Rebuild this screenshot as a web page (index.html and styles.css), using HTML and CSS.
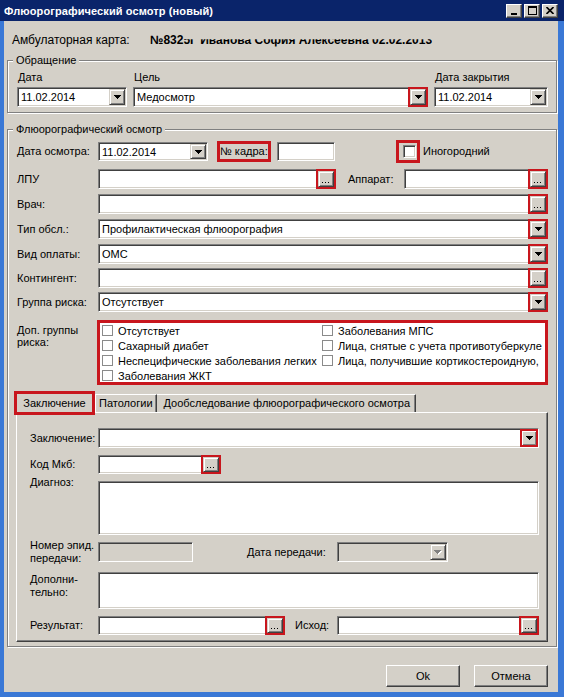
FILE: index.html
```html
<!DOCTYPE html>
<html lang="ru">
<head>
<meta charset="utf-8">
<title>Флюорографический осмотр (новый)</title>
<link rel="stylesheet" href="styles.css">
</head>
<body>
<div class="window">
  <div class="titlebar">
    <span class="title">Флюорографический осмотр (новый)</span>
    <div class="caption-btns">
      <span class="cbtn"><svg width="8" height="8" viewBox="0 0 8 8"><rect x="1" y="6" width="6" height="2" fill="#000"/></svg></span>
      <span class="cbtn"><svg width="9" height="9" viewBox="0 0 9 9"><rect x="0.5" y="0.5" width="8" height="8" fill="none" stroke="#000"/><rect x="0" y="0" width="9" height="2" fill="#000"/></svg></span>
      <span class="cbtn"><svg width="8" height="7" viewBox="0 0 8 7"><path d="M0.5 0 L7.5 7 M7.5 0 L0.5 7" stroke="#000" stroke-width="1.6" fill="none"/></svg></span>
    </div>
  </div>

  <div class="client">
    <div class="card-row">
      <span class="card-label">Амбулаторная карта:</span>
      <span class="card-value">№832<span class="card-clipped">5Г Иванова София Алексеевна 02.02.2013</span></span>
    </div>

    <fieldset class="group group-visit">
      <legend>Обращение</legend>
      <div class="visit-row">
        <div class="visit-col col-date">
          <div class="cap">Дата</div>
          <div class="field"><span class="val">11.02.2014</span><span class="btn"><svg class="tri" width="7" height="4" viewBox="0 0 7 4"><path d="M0 0h7v1h-1v1h-1v1h-1v1h-1v-1h-1v-1h-1v-1h-1z"/></svg></span></div>
        </div>
        <div class="visit-col col-goal">
          <div class="cap">Цель</div>
          <div class="field"><span class="val">Медосмотр</span><span class="btn mark"><svg class="tri" width="7" height="4" viewBox="0 0 7 4"><path d="M0 0h7v1h-1v1h-1v1h-1v1h-1v-1h-1v-1h-1v-1h-1z"/></svg></span></div>
        </div>
        <div class="visit-col col-close">
          <div class="cap">Дата закрытия</div>
          <div class="field"><span class="val">11.02.2014</span><span class="btn"><svg class="tri" width="7" height="4" viewBox="0 0 7 4"><path d="M0 0h7v1h-1v1h-1v1h-1v1h-1v-1h-1v-1h-1v-1h-1z"/></svg></span></div>
        </div>
      </div>
    </fieldset>

    <fieldset class="group group-exam">
      <legend>Флюорографический осмотр</legend>

      <div class="row row-first">
        <span class="lbl lbl-main">Дата осмотра:</span>
        <div class="field f-date short"><span class="val">11.02.2014</span><span class="btn"><svg class="tri" width="7" height="4" viewBox="0 0 7 4"><path d="M0 0h7v1h-1v1h-1v1h-1v1h-1v-1h-1v-1h-1v-1h-1z"/></svg></span></div>
        <span class="lbl mark-box frame-lbl">№ кадра:</span>
        <div class="field f-frame short"></div>
        <span class="mark-box chk-wrap"><span class="chk3d"></span></span>
        <span class="lbl chk-text">Иногородний</span>
      </div>

      <div class="row row-lpu">
        <span class="lbl lbl-main">ЛПУ</span>
        <div class="field f-lpu"><span class="val"></span><span class="btn dots mark"><svg width="8" height="1" viewBox="0 0 8 1"><rect x="0" y="0" width="1" height="1"/><rect x="3" y="0" width="1" height="1"/><rect x="6" y="0" width="1" height="1"/></svg></span></div>
        <span class="lbl lbl-app">Аппарат:</span>
        <div class="field f-app"><span class="val"></span><span class="btn dots mark"><svg width="8" height="1" viewBox="0 0 8 1"><rect x="0" y="0" width="1" height="1"/><rect x="3" y="0" width="1" height="1"/><rect x="6" y="0" width="1" height="1"/></svg></span></div>
      </div>

      <div class="row row-m5">
        <span class="lbl lbl-main">Врач:</span>
        <div class="field f-full"><span class="val"></span><span class="btn dots mark"><svg width="8" height="1" viewBox="0 0 8 1"><rect x="0" y="0" width="1" height="1"/><rect x="3" y="0" width="1" height="1"/><rect x="6" y="0" width="1" height="1"/></svg></span></div>
      </div>

      <div class="row row-m5">
        <span class="lbl lbl-main">Тип обсл.:</span>
        <div class="field f-full"><span class="val">Профилактическая флюорография</span><span class="btn mark"><svg class="tri" width="7" height="4" viewBox="0 0 7 4"><path d="M0 0h7v1h-1v1h-1v1h-1v1h-1v-1h-1v-1h-1v-1h-1z"/></svg></span></div>
      </div>

      <div class="row row-m5">
        <span class="lbl lbl-main">Вид оплаты:</span>
        <div class="field f-full"><span class="val">ОМС</span><span class="btn mark"><svg class="tri" width="7" height="4" viewBox="0 0 7 4"><path d="M0 0h7v1h-1v1h-1v1h-1v1h-1v-1h-1v-1h-1v-1h-1z"/></svg></span></div>
      </div>

      <div class="row row-m4">
        <span class="lbl lbl-main">Контингент:</span>
        <div class="field f-full"><span class="val"></span><span class="btn dots mark"><svg width="8" height="1" viewBox="0 0 8 1"><rect x="0" y="0" width="1" height="1"/><rect x="3" y="0" width="1" height="1"/><rect x="6" y="0" width="1" height="1"/></svg></span></div>
      </div>

      <div class="row row-m4">
        <span class="lbl lbl-main">Группа риска:</span>
        <div class="field f-full"><span class="val">Отсутствует</span><span class="btn mark"><svg class="tri" width="7" height="4" viewBox="0 0 7 4"><path d="M0 0h7v1h-1v1h-1v1h-1v1h-1v-1h-1v-1h-1v-1h-1z"/></svg></span></div>
      </div>

      <div class="row row-check">
        <span class="lbl lbl-main lbl-multi">Доп. группы<br>риска:</span>
        <div class="checklist">
          <div class="cl-col cl-col1">
            <div class="cl-item"><span class="cb"></span>Отсутствует</div>
            <div class="cl-item"><span class="cb"></span>Сахарный диабет</div>
            <div class="cl-item"><span class="cb"></span>Неспецифические заболевания легких</div>
            <div class="cl-item"><span class="cb"></span>Заболевания ЖКТ</div>
          </div>
          <div class="cl-col cl-col2">
            <div class="cl-item"><span class="cb"></span>Заболевания МПС</div>
            <div class="cl-item"><span class="cb"></span>Лица, снятые с учета противотуберкуле</div>
            <div class="cl-item"><span class="cb"></span>Лица, получившие кортикостероидную,</div>
          </div>
        </div>
      </div>

      <div class="tabs">
        <span class="tab tab-active">Заключение</span>
        <span class="tab tab-path">Патологии</span>
        <span class="tab tab-extra">Дообследование флюорографического осмотра</span>
      </div>
      <div class="tabpanel">
        <div class="prow prow-first">
          <span class="plbl">Заключение:</span>
          <div class="field p-full"><span class="val"></span><span class="btn mark-in"><svg class="tri" width="7" height="4" viewBox="0 0 7 4"><path d="M0 0h7v1h-1v1h-1v1h-1v1h-1v-1h-1v-1h-1v-1h-1z"/></svg></span></div>
        </div>
        <div class="prow">
          <span class="plbl">Код Мкб:</span>
          <div class="field p-mkb short"><span class="val"></span><span class="btn dots mark"><svg width="8" height="1" viewBox="0 0 8 1"><rect x="0" y="0" width="1" height="1"/><rect x="3" y="0" width="1" height="1"/><rect x="6" y="0" width="1" height="1"/></svg></span></div>
        </div>
        <div class="prow prow-top">
          <span class="plbl plbl-diag">Диагноз:</span>
          <div class="field p-full p-diag"></div>
        </div>
        <div class="prow prow-top">
          <span class="plbl plbl-num">Номер эпид.<br>передачи:</span>
          <div class="field p-num disabled"></div>
          <span class="plbl plbl-date">Дата передачи:</span>
          <div class="field p-date disabled"><span class="val"></span><span class="btn btn-dis"><svg class="tri" width="8" height="5" viewBox="0 0 8 5"><path d="M1 1h7v1h-1v1h-1v1h-1v1h-1v-1h-1v-1h-1v-1h-1z" fill="#fff"/><path d="M0 0h7v1h-1v1h-1v1h-1v1h-1v-1h-1v-1h-1v-1h-1z" fill="#808080"/></svg></span></div>
        </div>
        <div class="prow prow-top">
          <span class="plbl plbl-more">Дополни-<br>тельно:</span>
          <div class="field p-full p-more"></div>
        </div>
        <div class="prow">
          <span class="plbl">Результат:</span>
          <div class="field p-res short"><span class="val"></span><span class="btn dots mark"><svg width="8" height="1" viewBox="0 0 8 1"><rect x="0" y="0" width="1" height="1"/><rect x="3" y="0" width="1" height="1"/><rect x="6" y="0" width="1" height="1"/></svg></span></div>
          <span class="plbl plbl-out">Исход:</span>
          <div class="field p-out short"><span class="val"></span><span class="btn dots mark"><svg width="8" height="1" viewBox="0 0 8 1"><rect x="0" y="0" width="1" height="1"/><rect x="3" y="0" width="1" height="1"/><rect x="6" y="0" width="1" height="1"/></svg></span></div>
        </div>
      </div>
    </fieldset>

    <div class="actions">
      <span class="pbtn">Ok</span>
      <span class="pbtn">Отмена</span>
    </div>
  </div>
</div>
</body>
</html>
```

FILE: styles.css
```css
* { box-sizing: border-box; }
html, body { margin: 0; padding: 0; }
body {
  width: 564px; height: 697px; overflow: hidden;
  background: #3a78d6;
  font-family: "Liberation Sans", Arial, sans-serif;
  font-size: 11px; color: #000;
}
.window { width: 564px; height: 697px; display: flex; flex-direction: column; }

/* title bar */
.titlebar {
  height: 21px; flex: none; background: #0a246a; color: #fff;
  display: flex; align-items: center; padding: 0 6px 0 4px;
}
.title { flex: 1; font-weight: bold; font-size: 11px; letter-spacing: 0.1px; }
.caption-btns { display: flex; gap: 2px; }
.cbtn {
  width: 16px; height: 14px; background: #d4d0c8;
  border: 1px solid; border-color: #fff #404040 #404040 #fff;
  box-shadow: inset -1px -1px 0 #808080;
  display: flex; align-items: center; justify-content: center;
}

/* client area */
.client {
  flex: 1; margin: 0 6px 5px 4px; background: #d4d0c8;
  display: flex; flex-direction: column;
}

.card-row {
  height: 19px; margin-top: 9px; padding-left: 8px;
  display: flex; align-items: center; font-size: 12px; white-space: nowrap;
}
.card-label { width: 138px; flex: none; }
.card-value { font-weight: bold; }
.card-clipped { display: inline-block; clip-path: inset(48% 0 0 0); }

/* group boxes */
.group {
  margin: 0 0 0 3px; width: 550px; min-width: 0;
  border: 1px solid #808080;
  box-shadow: inset 1px 1px 0 #fff, 1px 1px 0 #fff;
  padding: 0 8px 0 9px;
}
.group legend {
  padding: 0 3px; margin-left: -4px; line-height: 13px; height: 13px;
  background: #d4d0c8;
}
.group-visit { margin-top: 5px; padding-bottom: 5px; }
.group-exam { margin-top: 10px; padding-bottom: 4px; }

.visit-row { display: flex; gap: 6px; }
.visit-col { flex: none; }
.col-date { width: 110px; }
.col-goal { width: 295px; }
.col-close { width: 114px; }
.cap { height: 13px; line-height: 13px; margin-top: 4px; margin-bottom: 3px; padding-left: 1px; }

/* fields */
.field {
  height: 20px; background: #fff; flex: none;
  border: 1px solid; border-color: #808080 #fff #fff #808080;
  box-shadow: inset 1px 1px 0 #404040, inset -1px -1px 0 #d4d0c8;
  display: flex; align-items: stretch; padding: 1px;
}
.field.short { height: 19px; }
.field.disabled { background: #d4d0c8; }
.val { flex: 1; padding-left: 2px; white-space: nowrap; overflow: hidden; line-height: 16px; }
.btn {
  width: 16px; flex: none; background: #d4d0c8;
  border: 1px solid; border-color: #d4d0c8 #404040 #404040 #d4d0c8;
  box-shadow: inset 1px 1px 0 #fff, inset -1px -1px 0 #808080;
  display: flex; align-items: center; justify-content: center;
}
.btn.dots { align-items: flex-end; padding-bottom: 3px; }
.btn svg { display: block; fill: #000; }
.mark { outline: 2px solid #c8161d; outline-offset: 0; }
.mark-in { outline: 2px solid #c8161d; outline-offset: -1px; }
.mark-box { border: 3px solid #c8161d; }

/* exam rows */
.row { display: flex; align-items: center; height: 20px; }
.row-first { margin-top: 6px; height: 19px; }
.row-lpu { margin-top: 8px; }
.row-m5 { margin-top: 5px; }
.row-m4 { margin-top: 4px; }
.lbl { line-height: 13px; white-space: nowrap; flex: none; }
.lbl-main { width: 81px; }
.f-date { width: 110px; }
.frame-lbl { margin-left: 9px; width: 54px; height: 21px; line-height: 15px; padding-left: 0; margin-top: -1px; margin-bottom: -1px; }
.f-frame { width: 58px; margin-left: 6px; }
.chk-wrap { width: 24px; height: 23px; margin-left: 61px; display: flex; align-items: center; justify-content: center; padding-left: 2px; }
.chk3d {
  width: 13px; height: 13px; background: #fff;
  border: 1px solid; border-color: #808080 #fff #fff #808080;
  box-shadow: inset 1px 1px 0 #404040, inset -1px -1px 0 #d4d0c8;
}
.chk-text { margin-left: 3px; }
.f-lpu { width: 238px; }
.lbl-app { margin-left: 12px; width: 56px; }
.f-app { width: 144px; }
.f-full { width: 450px; }

.row-check { margin-top: 8px; height: 65px; align-items: flex-start; }
.lbl-multi { padding-top: 4px; line-height: 12px; }
.checklist {
  width: 454px; height: 65px; margin-left: -1px;
  border: 3px solid #c8161d; background: #fff;
  display: flex; overflow: hidden; padding-left: 2px;
}
.cl-col { flex: none; }
.cl-col1 { width: 220px; }
.cl-col2 { width: 226px; }
.cl-item { height: 15px; display: flex; align-items: center; white-space: nowrap; }
.cb {
  width: 11px; height: 11px; flex: none; margin-right: 5px;
  border: 1px solid #8a8a8a; background: #fff;
}

/* tabs */
.tabs { display: flex; align-items: flex-end; height: 21px; margin-top: 6px; margin-left: -3px; }
.tab {
  height: 18px; line-height: 16px; padding: 0 4px; white-space: nowrap;
  border-top: 1px solid #fff; border-left: 1px solid #fff; border-right: 1px solid #404040;
  box-shadow: inset -1px 0 0 #808080;
}
.tab-active {
  position: relative; z-index: 1;
  width: 81px; height: 24px; margin-bottom: -3px; text-align: center;
  border: 3px solid #c8161d; box-shadow: none; background: #d4d0c8;
  line-height: 18px; padding: 0;
}
.tab-path { padding: 0 3px 0 3px; }
.tab-extra { padding: 0 5px 0 7px; border-left: none; }
.tabpanel {
  margin-left: -1px; width: 532px; height: 230px;
  border: 1px solid; border-color: #fff #404040 #404040 #fff;
  box-shadow: inset -1px -1px 0 #808080;
  padding-left: 13px;
  display: flex; flex-direction: column;
}
.prow { display: flex; align-items: center; margin-top: 7px; }
.prow-first { margin-top: 15px; }
.prow-top { align-items: flex-start; }
.plbl { flex: none; line-height: 13px; white-space: nowrap; }
.prow > .plbl:first-child { width: 68px; }
.p-full { width: 441px; }
.p-mkb { width: 123px; }
.p-diag { height: 54px; }
.plbl-diag { margin-top: -5px; }
.p-num { width: 95px; }
.plbl-num { margin-top: -3px; }
.plbl-date { margin-left: 54px; margin-top: 4px; width: 90px; }
.p-date { width: 111px; }
.p-more { height: 37px; }
.plbl-more { margin-top: 1px; }
.p-res { width: 187px; }
.plbl-out { margin-left: 10px; width: 42px; }
.p-out { width: 202px; }

/* bottom buttons */
.actions { display: flex; justify-content: flex-end; gap: 14px; margin-top: 18px; padding-right: 10px; }
.pbtn {
  width: 74px; height: 22px; text-align: center; line-height: 20px;
  border: 1px solid; border-color: #fff #404040 #404040 #fff;
  box-shadow: inset -1px -1px 0 #808080;
  background: #d4d0c8;
}
```
